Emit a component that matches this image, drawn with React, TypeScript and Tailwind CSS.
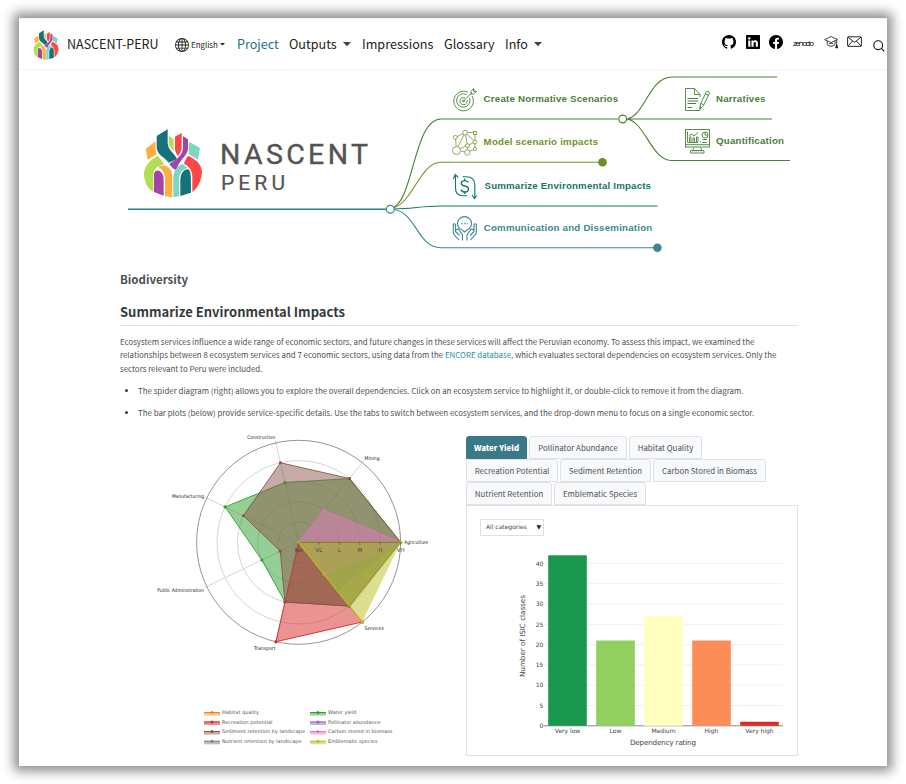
import React from "react";
import { BsFacebook, BsGithub, BsGlobe, BsLinkedin } from "react-icons/bs";

const GREEN = "#4a8035";
const OLIVE = "#71912c";
const TEAL = "#117866";
const BLUE = "#3a8792";

function LogoMark() {
  return (
    <g>
      <path fill="#b5dd54" d="M143 137C115 152 100 174 102 196C105 222 115 238 130 245V195C131 176 144 168 163 163C158 154 150 146 143 137Z" />
      <path fill="#fbb040" d="M107 117L136 94L138 128L141 133L113 149Z" />
      <path fill="#16727a" d="M140 78L173 58V98C174 123 195 128 201 148L176 158C164 140 140 136 140 110Z" />
      <path fill="#b5dd54" d="M177 78L191 87V124L177 106Z" />
      <path fill="#ff4646" d="M195 80L215 69V112C214 124 209 131 204 138C196 128 195 123 195 115Z" />
      <path fill="#a344a8" d="M219 79L234 88V118C231 141 205 151 200 180C190 178 182 168 178 161C197 151 219 137 219 112Z" />
      <path fill="#7dd6c3" d="M238 95L270 114L264 149L236 132Z" />
      <path fill="#ff4646" d="M235 137C263 151 276 167 276 187C274 215 262 236 247 246V198C245 178 236 168 222 161C225 150 230 143 235 137Z" />
      <path fill="#fbb040" d="M145 171C163 160 184 170 187 196V262L165 259V207C164 188 158 179 145 171Z" />
      <path fill="#a344a8" d="M132 246V193C134 173 160 180 161 207V257Z" />
      <path fill="#7dd6c3" d="M190 262V203C192 178 207 162 219 163L233 174C216 180 208 190 207 207V259Z" />
      <path fill="#16727a" d="M211 258V207C213 187 223 177 236 178C243 188 243 198 243 248Z" />
    </g>
  );
}

function Caret({ small = false }: { small?: boolean }) {
  return small ? (
    <svg className="ml-[2px] h-[3px] w-[5px]" viewBox="0 0 5 3"><path d="M0 0H5L2.5 2.6Z" fill="#222" /></svg>
  ) : (
    <svg className="h-[5px] w-[8px]" viewBox="0 0 8 5"><path d="M0 0H8L4 4.3Z" fill="#444" /></svg>
  );
}

function Header() {
  return (
    <header className="flex h-[52px] shrink-0 items-center border-y border-[#f5f5f5] pt-[1px] pl-[14px] text-[12.6px] text-[#222]">
      <svg className="h-[30px] w-[26px]" viewBox="98 56 181 208"><LogoMark /></svg>
      <span className="ml-[8px] w-[108px] text-[12.500px] whitespace-nowrap">NASCENT-PERU</span>
      <BsGlobe className="size-[14px] shrink-0" />
      <span className="ml-[2px] w-[27px] whitespace-nowrap text-[7.900px]">English</span>
      <Caret small />
      <span className="ml-[12px] w-[52px] whitespace-nowrap text-[#1c7480]">Project</span>
      <span className="w-[54px] whitespace-nowrap">Outputs</span>
      <Caret />
      <span className="ml-[11px] w-[82px] whitespace-nowrap">Impressions</span>
      <span className="w-[61px] whitespace-nowrap">Glossary</span>
      <span className="w-[29px] whitespace-nowrap">Info</span>
      <Caret />
      <nav className="ml-auto flex shrink-0 items-center pr-[2px] pb-[5px] text-black">
        <BsGithub className="size-[14px]" />
        <BsLinkedin className="ml-[10px] size-[14px]" />
        <BsFacebook className="ml-[9px] size-[14px]" />
        <svg className="ml-[10px] h-[12px] w-[21px]" viewBox="0 0 21 12">
          <text x="0" y="9.500" textLength="21" className="font-['Open_Sans',sans-serif] text-[8px]">zenodo</text>
        </svg>
        <svg className="ml-[10px] h-[14px] w-[15px]" viewBox="0 0 15 14" fill="none" stroke="#111" strokeWidth=".8">
          <path d="M.7 4.7L7 1.500L13.400 4.500L7.200 7.600ZM3.200 6.200V9.500C5 11.800 9 11.800 11 9.500V6.200M5 9L7.200 8.200L9.400 9M12.700 4.800V11" />
          <path d="M11.600 12.800L12.700 9.800L13.800 12.800Z" fill="#111" />
        </svg>
        <svg className="ml-[8px] h-[12px] w-[15px]" viewBox="0 0 15 12" fill="none" stroke="#111" strokeWidth=".9">
          <rect x=".6" y=".8" width="13.800" height="9.600" rx=".7" />
          <path d="M1 1.200L7.500 6.400L14 1.200M1 10L5.600 5M14 10L9.400 5" />
        </svg>
        <svg className="mt-[7px] ml-[11px] h-[12px] w-[12px]" viewBox="0 0 12 12" fill="none" stroke="#111" strokeWidth="1.1">
          <circle cx="5.200" cy="5.200" r="4.400" /><path d="M8.400 8.400L11.300 11.300" />
        </svg>
      </nav>
    </header>
  );
}

function Hero() {
  return (
    <svg className="block h-[189px] w-[678px] shrink-0" viewBox="120 70 678 189" fill="none">
      <g transform="translate(110 110) scale(.3333)"><LogoMark /></g>
      <g fill="#545454" className="font-['Roboto',sans-serif]">
        <text x="220" y="164" textLength="148" stroke="#545454" strokeWidth=".4" className="text-[28.5px]">NASCENT</text>
        <text x="221" y="189.800" textLength="64" stroke="#545454" strokeWidth=".2" className="text-[21px]">PERU</text>
      </g>
      <g strokeWidth="1.1">
        <path stroke="#2b7f88" strokeWidth="1.4" d="M128 209.300H386" />
        <g stroke={GREEN}>
          <path d="M393 208C414 198 414 119 441 119H618M627 119C645 116 649 77 672 77H777M627 119H772M627 119C645 122 652 160.500 671 160.500H790" />
        </g>
        <path stroke={OLIVE} d="M393 208C413 203 420 162.300 441 162.300H600" />
        <path stroke={TEAL} d="M394 209C413 209 420 206 441 206H657.500" />
        <path stroke={BLUE} d="M394 209.500C417 213 417 247.700 441 247.700H655" />
      </g>
      <circle cx="390.300" cy="209.300" r="3.900" fill="#fff" stroke={BLUE} strokeWidth="1.2" />
      <circle cx="622.700" cy="119" r="3.900" fill="#fff" stroke={GREEN} strokeWidth="1.2" />
      <circle cx="602.500" cy="162.300" r="4.300" fill="#6b8f28" />
      <circle cx="657.400" cy="247.700" r="4.300" fill={BLUE} />
      <g className="font-['Liberation_Sans',sans-serif] text-[9.7px] font-bold">
        <text x="483.600" y="102" textLength="134.500" fill={GREEN}>Create Normative Scenarios</text>
        <text x="483.600" y="145.200" textLength="114.500" fill={OLIVE}>Model scenario impacts</text>
        <text x="484.500" y="189.200" textLength="166.500" fill={TEAL}>Summarize Environmental Impacts</text>
        <text x="483.700" y="231.200" textLength="168.500" fill={BLUE}>Communication and Dissemination</text>
        <text x="716" y="102" textLength="49.500" fill={GREEN}>Narratives</text>
        <text x="716" y="144.200" textLength="68" fill={GREEN}>Quantification</text>
      </g>
      <g stroke={GREEN} strokeWidth=".9">
        <path d="M468 92.300A9.800 9.800 0 1 0 472 96M466.500 94.600A6.700 6.700 0 1 0 469.500 98M465 97.800A3.600 3.600 0 1 0 467 100M463.400 101L472 92.500M471 91.500L473.500 88.600L474 91.300L476.500 91.500L473.500 94.200L471 94ZM473.500 88.600L474 91.300" />
        <circle cx="463.500" cy="101" r="1" />
        <path d="M700 106V110.500H685.500V88.500H694.500L700 94.500V97M694.500 88.500V94.500H700M700 109L700.500 104L706.500 91.500Q709 90 709.500 93L703.500 105.500ZM705.500 94L708.800 95.500M701 103.500L704 105" />
        <path strokeWidth="1.1" d="M687.500 98.500H698M687.500 101H698M687.500 103.500H696M687.500 107.500H692" />
        <rect x="685.500" y="129.500" width="24" height="17.500" /><path d="M686 144.700H709M694 147.500L692.500 150.500H702L700.500 147.500M690.500 150.700H704V153H690.500Z" />
        <path d="M687.500 131.500V142.500H698M689.500 142V137H691V142M693 142V138H694.500V142M696.500 142V137H698V142M689 136L691 134L694 136L698 132.500M702.500 139.500H707M702.500 142.500H707M700 142H701" />
        <circle cx="705" cy="135" r="3" /><path d="M705 132V135H708" />
      </g>
      <g stroke="#86a24a" strokeWidth=".9">
        <path d="M455.500 137.500L456.500 150M455.500 137.500L465 132.500M465 132.500L456.500 150M465 132.500L467.500 145.500M465 132.500H475M465 132.500L474.800 142M475 132.500V149M456.500 150L467.500 145.500M456.500 150L467 152.500M467.500 145.500L475 142M467 152.500L475 149M468 146L467 152" />
        <g fill="#fff">
          <circle cx="455.300" cy="137.300" r="2" /><circle cx="465" cy="132.700" r="2.300" /><rect x="473.500" y="131.500" width="3" height="3" />
          <circle cx="475" cy="142" r="1.900" /><circle cx="467.500" cy="145.700" r="2" /><circle cx="456.500" cy="150.500" r="4" /><circle cx="467.300" cy="152.500" r="2.700" /><circle cx="475" cy="149" r="1.600" />
        </g>
      </g>
      <g stroke={TEAL} strokeWidth="1.1">
        <path d="M467 195.800H463Q455.500 195.500 455.500 188V176M453.300 179L455.200 174.500L458.300 177.300M462.500 176.700H466Q474.800 176.700 474.800 185V197.500M472 195L474.500 198.500L476.700 195.500" />
        <path strokeWidth="1.300" d="M468.300 182.500Q467.500 180.700 464.700 180.700Q461.300 180.700 461.300 183.300Q461.300 185.500 464.800 186Q468.500 186.500 468.500 189.300Q468.500 192 464.800 192Q461.500 192 461 189.500M464.800 178.500V181M464.800 192V194" />
      </g>
      <g stroke={BLUE} strokeWidth="1.1">
        <path d="M459.500 228.500A7 7 0 1 1 469.500 228.500Q467 229.500 464.500 232Q462 229.500 459.500 228.500Z" />
        <path strokeWidth="1.5" strokeDasharray="1.300 1.700" d="M461.300 223.500H468" />
        <path d="M453.300 224V233.500L459 240M453.300 224Q455.500 223 455.500 226V231.500L459.500 235.500M456 230Q458 228 459.500 230.500L462.500 235V240.500M476.300 224V233.500L470.500 240M476.300 224Q474 223 474 226V231.500L470 235.500M473.500 230Q471.500 228 470 230.500L467 235V240.500" />
      </g>
    </svg>
  );
}

const AXES = ["Agriculture", "Mining", "Construction", "Manufacturing", "Public Administration", "Transport", "Services"];
const CX = 298.6;
const CY = 542.3;
const STEP = 20.4;

function at(axis: number, level: number): [number, number] {
  const a = (axis * 2 * Math.PI) / AXES.length;
  return [CX + Math.cos(a) * level * STEP, CY - Math.sin(a) * level * STEP];
}

const SERIES = [
  { name: "Water yield", color: "#2ca02c", values: [5, 4, 3, 4, 2, 3, 4], outlined: true },
  { name: "Recreation potential", color: "#d62728", values: [0, 0, 0, 0, 0, 5, 5], outlined: true },
  { name: "Sediment retention by landscape", color: "#8c564b", values: [5, 4, 4, 3, 1, 3, 4], outlined: true },
  { name: "Carbon stored in biomass", color: "#e377c2", values: [5, 2, 0, 0, 0, 0, 2], outlined: true },
  { name: "Nutrient retention by landscape", color: "#7f7f7f", values: [5, 0, 0, 0, 0, 0, 3], outlined: false },
  { name: "Emblematic species", color: "#bcbd22", values: [5, 0, 0, 0, 0, 0, 5], outlined: false },
];

const AXIS_LABELS: [string, number, number, number][] = [
  ["Agriculture", 404.3, 544.2, 24],
  ["Mining", 364.5, 460.3, 15],
  ["Construction", 247.3, 439, 28],
  ["Manufacturing", 172, 498, 32],
  ["Public Administration", 157.3, 592, 46.5],
  ["Transport", 254, 650, 21.5],
  ["Services", 364.5, 630, 19.3],
];

const LEGEND: [string, string, number, number, number][] = [
  ["Habitat quality", "#ff7f0e", 204, 712.5, 37],
  ["Recreation potential", "#d62728", 204, 722, 50.5],
  ["Sediment retention by landscape", "#8c564b", 204, 731.5, 83],
  ["Nutrient retention by landscape", "#7f7f7f", 204, 741.3, 79.5],
  ["Water yield", "#2ca02c", 310, 712.5, 28.5],
  ["Pollinator abundance", "#9467bd", 310, 722, 52.5],
  ["Carbon stored in biomass", "#e377c2", 310, 731.5, 64.5],
  ["Emblematic species", "#bcbd22", 310, 741.3, 49.5],
];

function SpiderChart() {
  return (
    <svg className="block h-[325px] w-[346px] shrink-0 font-['DejaVu_Sans',sans-serif]" viewBox="120 431 346 325">
      <g fill="none" stroke="#d5d5d5" strokeWidth="1">
        {[1, 2, 3, 4].map((l) => <circle key={l} cx={CX} cy={CY} r={l * STEP} />)}
        {AXES.map((a, i) => {
          const [x, y] = at(i, 5.12);
          return <path key={a} d={`M${CX} ${CY}L${x} ${y}`} />;
        })}
      </g>
      <circle cx={CX} cy={CY} r={5 * STEP} fill="none" stroke="#888" strokeWidth=".9" />
      {SERIES.map((s) => (
        <g key={s.name} fill={s.color}>
          <polygon
            points={s.values.map((v, i) => at(i, v).join(",")).join(" ")}
            fillOpacity=".5"
            stroke={s.outlined ? s.color : "none"}
            strokeWidth=".9"
          />
          {s.values.map((v, i) => {
            const [x, y] = at(i, v);
            return v > 0 ? <circle key={i} cx={x} cy={y} r="1.600" /> : null;
          })}
        </g>
      ))}
      <path d={`M${CX} ${CY}L${at(6, 5).join(" ")}`} stroke="#bcbd22" strokeWidth="1.200" />
      <path d={`M${CX} ${CY}H${CX + 102}`} stroke="#8d8522" strokeWidth="1.200" />
      <circle cx={CX} cy={CY} r="1.600" fill="#bcbd22" />
      <g fill="#444" stroke="#555" strokeWidth=".7" className="text-[5.500px]">
        {["No", "VL", "L", "M", "H", "VH"].map((t, i) => (
          <g key={t}>
            <path d={`M${CX + i * STEP} ${CY}v2.500`} />
            <text x={CX + i * STEP} y={CY + 9.5} textAnchor="middle" stroke="none">{t}</text>
          </g>
        ))}
      </g>
      <g fill="#222" className="text-[5px]">
        {AXIS_LABELS.map(([t, x, y, w]) => <text key={t} x={x} y={y} textLength={w} lengthAdjust="spacingAndGlyphs">{t}</text>)}
      </g>
      <g className="text-[5px]">
        {LEGEND.map(([t, c, x, y, w]) => (
          <g key={t} fill={c}>
            <rect x={x} y={y - 0.5} width="16" height="3.500" opacity=".5" />
            <rect x={x} y={y - 0.5} width="16" height="1" />
            <circle cx={x + 8} cy={y} r="1.500" />
            <text x={x + 18} y={y + 1.7} textLength={w} lengthAdjust="spacingAndGlyphs" fill="#555">{t}</text>
          </g>
        ))}
      </g>
    </svg>
  );
}

const BARS: [string, number, string][] = [
  ["Very low", 42, "#1a9850"],
  ["Low", 21, "#91cf60"],
  ["Medium", 27, "#ffffbf"],
  ["High", 21, "#fc8d59"],
  ["Very high", 1, "#d73027"],
];

function BarChart() {
  return (
    <svg className="block h-[214px] w-[330px] font-['DejaVu_Sans',sans-serif]" viewBox="467 541 330 214">
      {[0, 5, 10, 15, 20, 25, 30, 35, 40].map((v) => (
        <g key={v}>
          <path d={`M543.500 ${725.8 - v * 4.06}H783`} stroke={v ? "#f1f1f1" : "#888"} strokeWidth="1" />
          <text x="543.300" y={728 - v * 4.06} textAnchor="end" fill="#444" className="text-[6px]">{v}</text>
        </g>
      ))}
      {BARS.map(([t, v, c], i) => (
        <g key={t}>
          <rect x={548.2 + i * 48} y={725.8 - v * 4.06} width="38.600" height={v * 4.06} fill={c} />
          <text x={567.5 + i * 48} y="733" textAnchor="middle" fill="#444" className="text-[6px]">{t}</text>
        </g>
      ))}
      <text x="663" y="745" textAnchor="middle" fill="#444" textLength="66" className="text-[7.200px]">Dependency rating</text>
      <text transform="translate(525 636) rotate(-90)" textAnchor="middle" fill="#444" textLength="82" className="text-[7.200px]">Number of ISIC classes</text>
    </svg>
  );
}

function Tab({ className, children }: { className: string; children: string }) {
  return (
    <button className={`h-[23px] shrink-0 rounded-t-[3px] border text-center text-[7.900px] leading-[21px] whitespace-nowrap ${className}`}>{children}</button>
  );
}

const IDLE = "border-[#dee2e6] bg-[#f8f9fa] text-[#4c5156]";

function Explorer() {
  return (
    <section className="w-[332px] shrink-0 pt-[5px]">
      <div className="flex gap-[2px]">
        <Tab className="w-[61px] border-[#3a7987] bg-[#3a7987] font-black text-white">Water Yield</Tab>
        <Tab className={`w-[98px] ${IDLE}`}>Pollinator Abundance</Tab>
        <Tab className={`w-[73px] ${IDLE}`}>Habitat Quality</Tab>
      </div>
      <div className="flex gap-[2px]">
        <Tab className={`w-[92px] ${IDLE}`}>Recreation Potential</Tab>
        <Tab className={`w-[91px] ${IDLE}`}>Sediment Retention</Tab>
        <Tab className={`w-[113px] ${IDLE}`}>Carbon Stored in Biomass</Tab>
      </div>
      <div className="flex gap-[2px]">
        <Tab className={`w-[86px] ${IDLE}`}>Nutrient Retention</Tab>
        <Tab className={`w-[92px] ${IDLE}`}>Emblematic Species</Tab>
      </div>
      <div className="h-[251px] border border-[#dee2e6] pt-[13px]">
        <div className="ml-[13px] flex h-[17px] w-[64px] items-center justify-between border border-[#dbe0ea] pr-[2px] pb-[1px] pl-[5px] font-['DejaVu_Sans',sans-serif] text-[6px] text-[#444]">
          <span>All categories</span>
          <span className="text-[6px] text-[#222]">▼</span>
        </div>
        <div className="mt-[5px]"><BarChart /></div>
      </div>
    </section>
  );
}

export default function App() {
  return (
    <div className="h-[784px] w-[906px] overflow-hidden bg-white pt-[18px] pl-[19px]">
      <main className="flex h-[748px] w-[868px] flex-col bg-white font-['Noto_Sans_CJK_SC',sans-serif] text-[#4c5156] shadow-[0_0_11px_5px_rgba(0,0,0,0.46)]">
        <Header />
        <div className="flex w-[779px] flex-col pl-[101px]">
          <Hero />
          <h2 className="mt-[10px] h-[20px] text-[11.500px] leading-[20px] font-bold whitespace-nowrap">Biodiversity</h2>
          <h1 className="mt-[12px] h-[25px] border-b border-[#dee2e6] text-[13px] leading-[22px] font-bold whitespace-nowrap text-[#343a40]">Summarize Environmental Impacts</h1>
          <p className="mt-[9px] text-[7.900px] leading-[13.300px] whitespace-nowrap">
            Ecosystem services influence a wide range of economic sectors, and future changes in these services will affect the Peruvian economy. To assess this impact, we examined the<br />
            relationships between 8 ecosystem services and 7 economic sectors, using data from the <a className="text-[#1f8f9f]">ENCORE database</a>, which evaluates sectoral dependencies on ecosystem services. Only the<br />
            sectors relevant to Peru were included.
          </p>
          <ul className="mt-[9px] flex flex-col gap-[8px] pl-[18px] text-[7.900px] leading-[14px] whitespace-nowrap">
            <li className="flex items-center"><span className="mr-[10px] -ml-[13px] size-[3px] rounded-full bg-[#343a40]" />The spider diagram (right) allows you to explore the overall dependencies. Click on an ecosystem service to highlight it, or double-click to remove it from the diagram.</li>
            <li className="flex items-center"><span className="mr-[10px] -ml-[13px] size-[3px] rounded-full bg-[#343a40]" />The bar plots (below) provide service-specific details. Use the tabs to switch between ecosystem services, and the drop-down menu to focus on a single economic sector.</li>
          </ul>
          <div className="mt-[11px] flex">
            <SpiderChart />
            <Explorer />
          </div>
        </div>
      </main>
    </div>
  );
}
